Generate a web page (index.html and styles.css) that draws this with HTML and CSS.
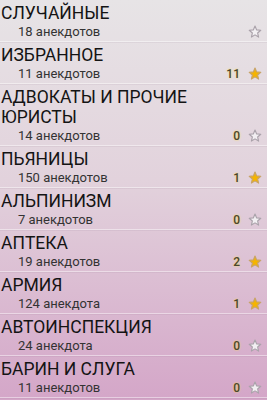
FILE: index.html
```html
<!DOCTYPE html>
<html>
  <head>
    <meta charset="utf-8">
    <title>Анекдоты</title>
    <link rel="stylesheet" href="styles.css">
  </head>
  <body>
    <svg width="0" height="0" class="defs">
      <defs>
        <path id="star" d="M8 1.2 L9.9 5.6 L14.6 6 L11 9.1 L12.1 13.8 L8 11.3 L3.9 13.8 L5 9.1 L1.4 6 L6.1 5.6 Z"/>
      </defs>
    </svg>

    <ul class="list">
      <li class="row">
        <div class="title">СЛУЧАЙНЫЕ</div>
        <div class="meta"><span class="sub">18 анекдотов</span><span class="count"></span><svg class="star" viewBox="0 0 16 16"><use href="#star"/></svg></div>
      </li>
      <li class="row">
        <div class="title">ИЗБРАННОЕ</div>
        <div class="meta"><span class="sub">11 анекдотов</span><span class="count">11</span><svg class="star on" viewBox="0 0 16 16"><use href="#star"/></svg></div>
      </li>
      <li class="row">
        <div class="title">АДВОКАТЫ И ПРОЧИЕ ЮРИСТЫ</div>
        <div class="meta"><span class="sub">14 анекдотов</span><span class="count">0</span><svg class="star" viewBox="0 0 16 16"><use href="#star"/></svg></div>
      </li>
      <li class="row">
        <div class="title">ПЬЯНИЦЫ</div>
        <div class="meta"><span class="sub">150 анекдотов</span><span class="count">1</span><svg class="star on" viewBox="0 0 16 16"><use href="#star"/></svg></div>
      </li>
      <li class="row">
        <div class="title">АЛЬПИНИЗМ</div>
        <div class="meta"><span class="sub">7 анекдотов</span><span class="count">0</span><svg class="star" viewBox="0 0 16 16"><use href="#star"/></svg></div>
      </li>
      <li class="row">
        <div class="title">АПТЕКА</div>
        <div class="meta"><span class="sub">19 анекдотов</span><span class="count">2</span><svg class="star on" viewBox="0 0 16 16"><use href="#star"/></svg></div>
      </li>
      <li class="row">
        <div class="title">АРМИЯ</div>
        <div class="meta"><span class="sub">124 анекдота</span><span class="count">1</span><svg class="star on" viewBox="0 0 16 16"><use href="#star"/></svg></div>
      </li>
      <li class="row">
        <div class="title">АВТОИНСПЕКЦИЯ</div>
        <div class="meta"><span class="sub">24 анекдота</span><span class="count">0</span><svg class="star" viewBox="0 0 16 16"><use href="#star"/></svg></div>
      </li>
      <li class="row">
        <div class="title">БАРИН И СЛУГА</div>
        <div class="meta"><span class="sub">11 анекдотов</span><span class="count">0</span><svg class="star" viewBox="0 0 16 16"><use href="#star"/></svg></div>
      </li>
    </ul>
  </body>
</html>
```

FILE: styles.css
```css
html {
    height: 100%;
}

body {
    margin: 0;
    min-height: 100%;
    background: linear-gradient(to bottom, #e7e4e6 0%, #e2d2dc 45%, #d4a6c8 100%);
    font-family: Roboto, "Noto Sans", sans-serif;
    color: #111;
    overflow: hidden;
}

.defs {
    position: absolute;
}

.list {
    list-style: none;
    margin: 0;
    padding: 0;
}

.row {
    padding: 3px 5px 0 1px;
    border-bottom: 1px solid rgba(255, 255, 255, 0.45);
    box-shadow: 0 1px 0 rgba(120, 90, 110, 0.08);
}

.title {
    font-size: 17.5px;
    line-height: 20px;
    color: #141414;
}

.meta {
    display: flex;
    align-items: center;
    height: 18px;
    line-height: 18px;
}

.sub {
    flex: 1;
    padding-left: 17px;
    font-size: 13px;
    color: #333;
}

.count {
    font-size: 12px;
    font-weight: 500;
    color: #4a4530;
    text-shadow: 0 0 2px #ffe14a;
    margin-right: 8px;
}

.star {
    width: 14px;
    height: 14px;
}

.star use {
    fill: #f2eff2;
    stroke: #aaa2aa;
    stroke-width: 1.3;
    stroke-linejoin: round;
}

.star.on use {
    fill: #f5b400;
    stroke: #c8a468;
}
```
